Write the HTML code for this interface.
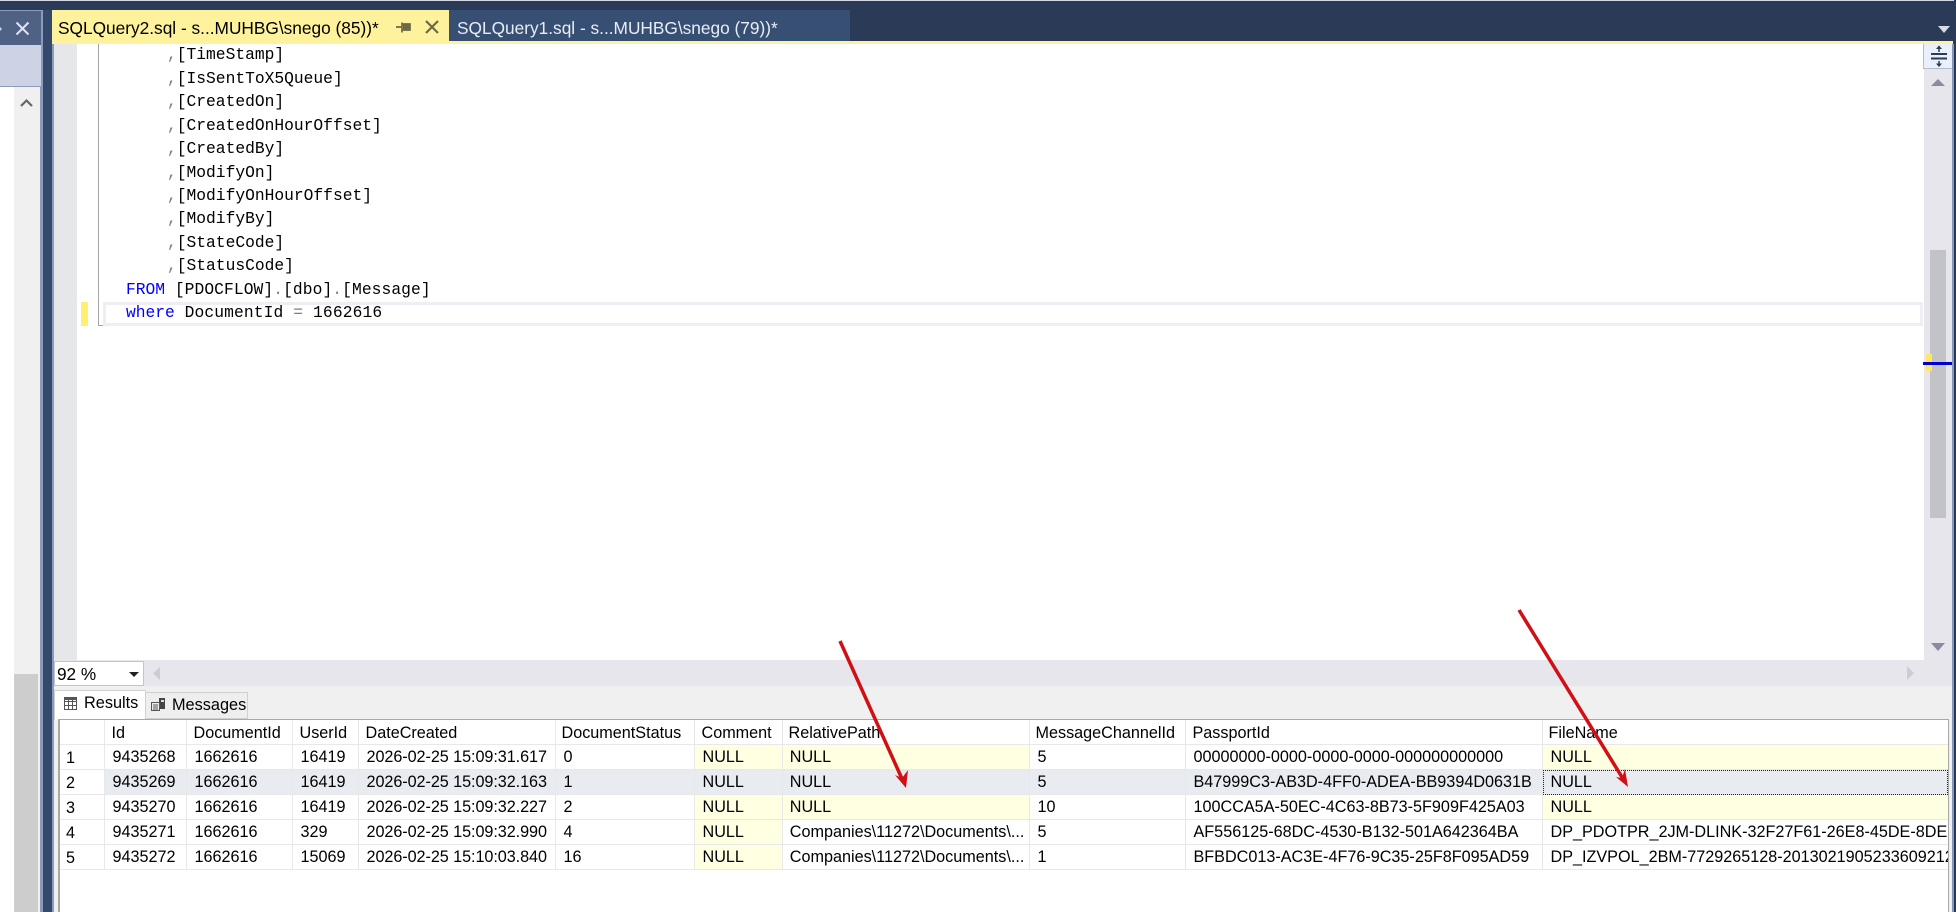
<!DOCTYPE html>
<html><head><meta charset="utf-8"><style>
html,body{margin:0;padding:0;width:1956px;height:912px;overflow:hidden;background:#2a3a57}
.a{position:absolute}
body{font-family:"Liberation Sans",sans-serif;color:#000}
.t{position:absolute;white-space:nowrap}
.code{position:absolute;left:0;font:16.28px/23.46px "Liberation Mono",monospace;white-space:pre;color:#000}
.code i{font-style:normal;color:#808080}.code b{font-weight:normal;color:#0000ff}
table{position:absolute;left:60px;top:720px;border-collapse:separate;border-spacing:0;table-layout:fixed;width:1888px;font-size:16.2px;background:#fff}
td{height:24px;padding:0 0 0 7.5px;border-right:1px solid #e8e8e8;border-bottom:1px solid #e8e8e8;white-space:nowrap;overflow:hidden;box-sizing:content-box;line-height:24px}
td:last-child{border-right:0}
tr.h td{padding-left:6.5px;padding-top:2px;height:22px;line-height:22px}
tr.h td.m{padding-left:5.5px}
td.rn{padding-left:6px;position:relative;top:0}
td.rn span{position:relative;top:1px}
td.d{letter-spacing:-.06px}
td.r{padding-left:6.8px}
.n{background:#ffffe1}
.s td{background:#e8ecf0}.s td.rn{background:#fff}
td.f{outline:1px dotted #222;outline-offset:-1px}
</style></head><body>
<div class="a" style="left:0;top:0;width:1956px;height:1px;background:#d5d8e5"></div>

<!-- left panel -->
<div class="a" style="left:0;top:10px;width:43px;height:902px;background:#8e9abb"></div>
<div class="a" style="left:0;top:11px;width:41px;height:34px;background:#4f6286"></div>
<div class="a" style="left:0;top:45px;width:41px;height:41px;background:#cdd3e5"></div>
<div class="a" style="left:0;top:87px;width:40px;height:825px;background:#fff"></div>
<div class="a" style="left:14px;top:87px;width:26px;height:587px;background:#f0f0f0"></div>
<div class="a" style="left:14px;top:674px;width:24px;height:238px;background:#cdcdcd"></div>
<div class="a" style="left:38px;top:674px;width:2px;height:238px;background:#f0f0f0"></div>
<div class="a" style="left:43px;top:10px;width:9px;height:902px;background:#344a6c"></div>
<svg class="a" style="left:0;top:0" width="60" height="120">
<path d="M0 27l2 2-2 2z" fill="#cfd5e5"/>
<path d="M16.500 22.500l12 12M28.500 22.500l-12 12" stroke="#dfe3ee" stroke-width="2" fill="none"/>
<path d="M21 106l5.500-5.500 5.500 5.500" stroke="#666" stroke-width="2.200" fill="none"/>
</svg>

<!-- tabs -->
<div class="a" style="left:449px;top:10px;width:401px;height:31px;background:#374f72"></div>
<div class="a" style="left:52px;top:10px;width:397px;height:34px;background:#fff29d"></div>
<div class="a" style="left:52px;top:41px;width:1901px;height:3px;background:#fff29d"></div>
<div class="t" style="left:58px;top:18px;font-size:17.300px;line-height:20px">SQLQuery2.sql - s...MUHBG\snego (85))*</div>
<div class="t" style="left:457px;top:18px;font-size:17.300px;line-height:20px;color:#e8edf5">SQLQuery1.sql - s...MUHBG\snego (79))*</div>
<svg class="a" style="left:390px;top:10px" width="60" height="34">
<path d="M6 17h6M12 12.500v10M12 14h8v6h-8" stroke="#6f6845" stroke-width="1.700" fill="none"/>
<path d="M13 14h7v6h-7z" fill="#6f6845"/>
<path d="M36 11l12 12M48 11l-12 12" stroke="#6f6845" stroke-width="2.200" fill="none"/>
</svg>
<svg class="a" style="left:1936px;top:24px" width="16" height="10"><path d="M2 2h12l-6 7z" fill="#d8dce6"/></svg>

<!-- editor -->
<div class="a" style="left:52px;top:44px;width:2px;height:868px;background:#8e9abb"></div>
<div class="a" style="left:54px;top:44px;width:23px;height:616px;background:#e6e7e8"></div>
<div class="a" style="left:77px;top:44px;width:1847px;height:616px;background:#fff"></div>
<div class="a" style="left:98px;top:44px;width:1px;height:282px;background:#a5a5a5"></div>
<div class="a" style="left:98px;top:325px;width:6px;height:1px;background:#a5a5a5"></div>
<div class="a" style="left:81px;top:302px;width:7px;height:24px;background:#fff16d"></div>
<div class="a" style="left:103px;top:302px;width:1814px;height:18px;border:3px solid #eeeef4"></div>

<div class="code" style="top:43.300px"><span style="margin-left:167px"></span><i>,</i>[TimeStamp]
<span style="margin-left:167px"></span><i>,</i>[IsSentToX5Queue]
<span style="margin-left:167px"></span><i>,</i>[CreatedOn]
<span style="margin-left:167px"></span><i>,</i>[CreatedOnHourOffset]
<span style="margin-left:167px"></span><i>,</i>[CreatedBy]
<span style="margin-left:167px"></span><i>,</i>[ModifyOn]
<span style="margin-left:167px"></span><i>,</i>[ModifyOnHourOffset]
<span style="margin-left:167px"></span><i>,</i>[ModifyBy]
<span style="margin-left:167px"></span><i>,</i>[StateCode]
<span style="margin-left:167px"></span><i>,</i>[StatusCode]
<span style="margin-left:126px"></span><b>FROM</b> <span style="letter-spacing:.08px">[PDOCFLOW]<i>.</i>[dbo]<i>.</i>[Message]</span>
<span style="margin-left:126px"></span><b>where</b> <span style="letter-spacing:.12px">DocumentId <i>=</i> 1662616</span></div>

<!-- vertical scrollbar -->
<div class="a" style="left:1924px;top:44px;width:28px;height:616px;background:#e6e6ec"></div>
<div class="a" style="left:1923px;top:44px;width:29px;height:25px;background:#e9effb;border-left:1px solid #b4bccf;border-bottom:1px solid #b4bccf;box-sizing:border-box"></div>
<svg class="a" style="left:1924px;top:44px" width="28" height="25">
<path d="M7 10h16M7 14.500h16" stroke="#2a3a57" stroke-width="2" fill="none"/>
<path d="M15 8V2M15 17v5" stroke="#2a3a57" stroke-width="1.500"/>
<path d="M12 5l3-3.500 3 3.500zM12 19.500l3 3.500 3-3.500z" fill="#2a3a57"/>
</svg>
<svg class="a" style="left:1924px;top:76px" width="28" height="12"><path d="M7 10l7-7 7 7z" fill="#8b8b9e"/></svg>
<div class="a" style="left:1930px;top:250px;width:16px;height:268px;background:#c2c3c9"></div>
<div class="a" style="left:1926px;top:354px;width:6px;height:17px;background:#ffe866"></div>
<div class="a" style="left:1923px;top:362px;width:29px;height:3px;background:#0000d0"></div>
<svg class="a" style="left:1924px;top:640px" width="28" height="14"><path d="M7 3h14l-7 8z" fill="#8b8b9e"/></svg>
<div class="a" style="left:1952px;top:44px;width:2px;height:868px;background:#8a97bd"></div>

<!-- horizontal bar -->
<div class="a" style="left:54px;top:660px;width:1898px;height:26px;background:#e6e6ec"></div>
<div class="a" style="left:54px;top:661px;width:90px;height:25px;background:#fff;border:1px solid #bcc5dc;box-sizing:border-box"></div>
<div class="t" style="left:57px;top:664px;font-size:17.200px;line-height:20px">92 %</div>
<svg class="a" style="left:128px;top:670px" width="14" height="8"><path d="M1 2h10l-5 5z" fill="#222"/></svg>
<svg class="a" style="left:150px;top:666px" width="16" height="16"><path d="M10 1v13l-7-6.500z" fill="#ccccd4"/></svg>
<svg class="a" style="left:1904px;top:665px" width="16" height="16"><path d="M3 1v14l7-7z" fill="#ccccd4"/></svg>

<!-- results tabs -->
<div class="a" style="left:54px;top:686px;width:1898px;height:226px;background:#f0f0f0"></div>
<div class="a" style="left:54px;top:690px;width:92px;height:30px;background:#fff;border:1px solid #d0d0d0;border-bottom:0;box-sizing:border-box"></div>
<div class="a" style="left:146px;top:692px;width:102px;height:27px;background:#eee;border:1px solid #d0d0d0;border-left:0;box-sizing:border-box"></div>
<svg class="a" style="left:64px;top:697px" width="14" height="14"><path d="M.5.500h12v12H.5zM.5 4.500h12M.5 8.500h12M4.500 2v11M8.500 2v11" stroke="#555" fill="none"/><path d="M0 0h13v3H0z" fill="#555"/></svg>
<svg class="a" style="left:150px;top:696px" width="16" height="16"><path d="M1.500 6.500h8v8h-8zM3 9h5M3 11h5M3 13h5" stroke="#555" fill="none"/><path d="M9 2h6v11H10V6H9z" fill="#444"/><path d="M11 4h3v2h-3z" fill="#ddd"/></svg>
<div class="t" style="left:84px;top:693px;font-size:16.300px;line-height:20px">Results</div>
<div class="t" style="left:172px;top:695px;font-size:16.300px;line-height:20px">Messages</div>

<!-- grid -->
<div class="a" style="left:58px;top:719px;width:1891px;height:193px;background:#fff;border-top:2px solid #a8a8a8;border-left:2px solid #a8a8a8;border-right:1px solid #a8a8a8;box-sizing:border-box"></div>
<table><colgroup><col style="width:45px"><col style="width:82px"><col style="width:106px"><col style="width:66px"><col style="width:197px"><col style="width:139px"><col style="width:88px"><col style="width:247px"><col style="width:156px"><col style="width:357px"><col style="width:405px"></colgroup>
<tr class="h"><td></td><td>Id</td><td>DocumentId</td><td>UserId</td><td>DateCreated</td><td class="m">DocumentStatus</td><td>Comment</td><td class="m">RelativePath</td><td class="m">MessageChannelId</td><td>PassportId</td><td class="m">FileName</td></tr>
<tr><td class="rn"><span>1</span></td><td>9435268</td><td>1662616</td><td>16419</td><td class="d">2026-02-25 15:09:31.617</td><td>0</td><td class="n">NULL</td><td class="n r">NULL</td><td>5</td><td>00000000-0000-0000-0000-000000000000</td><td class="n">NULL</td></tr>
<tr class="s"><td class="rn"><span>2</span></td><td>9435269</td><td>1662616</td><td>16419</td><td class="d">2026-02-25 15:09:32.163</td><td>1</td><td>NULL</td><td class="r">NULL</td><td>5</td><td>B47999C3-AB3D-4FF0-ADEA-BB9394D0631B</td><td class="f">NULL</td></tr>
<tr><td class="rn"><span>3</span></td><td>9435270</td><td>1662616</td><td>16419</td><td class="d">2026-02-25 15:09:32.227</td><td>2</td><td class="n">NULL</td><td class="n r">NULL</td><td>10</td><td>100CCA5A-50EC-4C63-8B73-5F909F425A03</td><td class="n">NULL</td></tr>
<tr><td class="rn"><span>4</span></td><td>9435271</td><td>1662616</td><td>329</td><td class="d">2026-02-25 15:09:32.990</td><td>4</td><td class="n">NULL</td><td class="r">Companies\11272\Documents\...</td><td>5</td><td>AF556125-68DC-4530-B132-501A642364BA</td><td>DP_PDOTPR_2JM-DLINK-32F27F61-26E8-45DE-8DEF</td></tr>
<tr><td class="rn"><span>5</span></td><td>9435272</td><td>1662616</td><td>15069</td><td class="d">2026-02-25 15:10:03.840</td><td>16</td><td class="n">NULL</td><td class="r">Companies\11272\Documents\...</td><td>1</td><td>BFBDC013-AC3E-4F76-9C35-25F8F095AD59</td><td>DP_IZVPOL_2BM-7729265128-20130219052336092123</td></tr>
</table>

<!-- arrows -->
<svg class="a" style="left:0;top:0" width="1956" height="912">
<path d="M840 641L903 781M1519 610L1625 782" stroke="#d01015" stroke-width="3.500" fill="none"/>
<path d="M906 788L895 775L902 778L908 770z" fill="#d01015"/>
<path d="M1628 787L1616 777L1622 778L1625 769z" fill="#d01015"/>
</svg>
<div class="a" style="left:1954px;top:0;width:2px;height:912px;background:#2a3a57"></div>
</body></html>
